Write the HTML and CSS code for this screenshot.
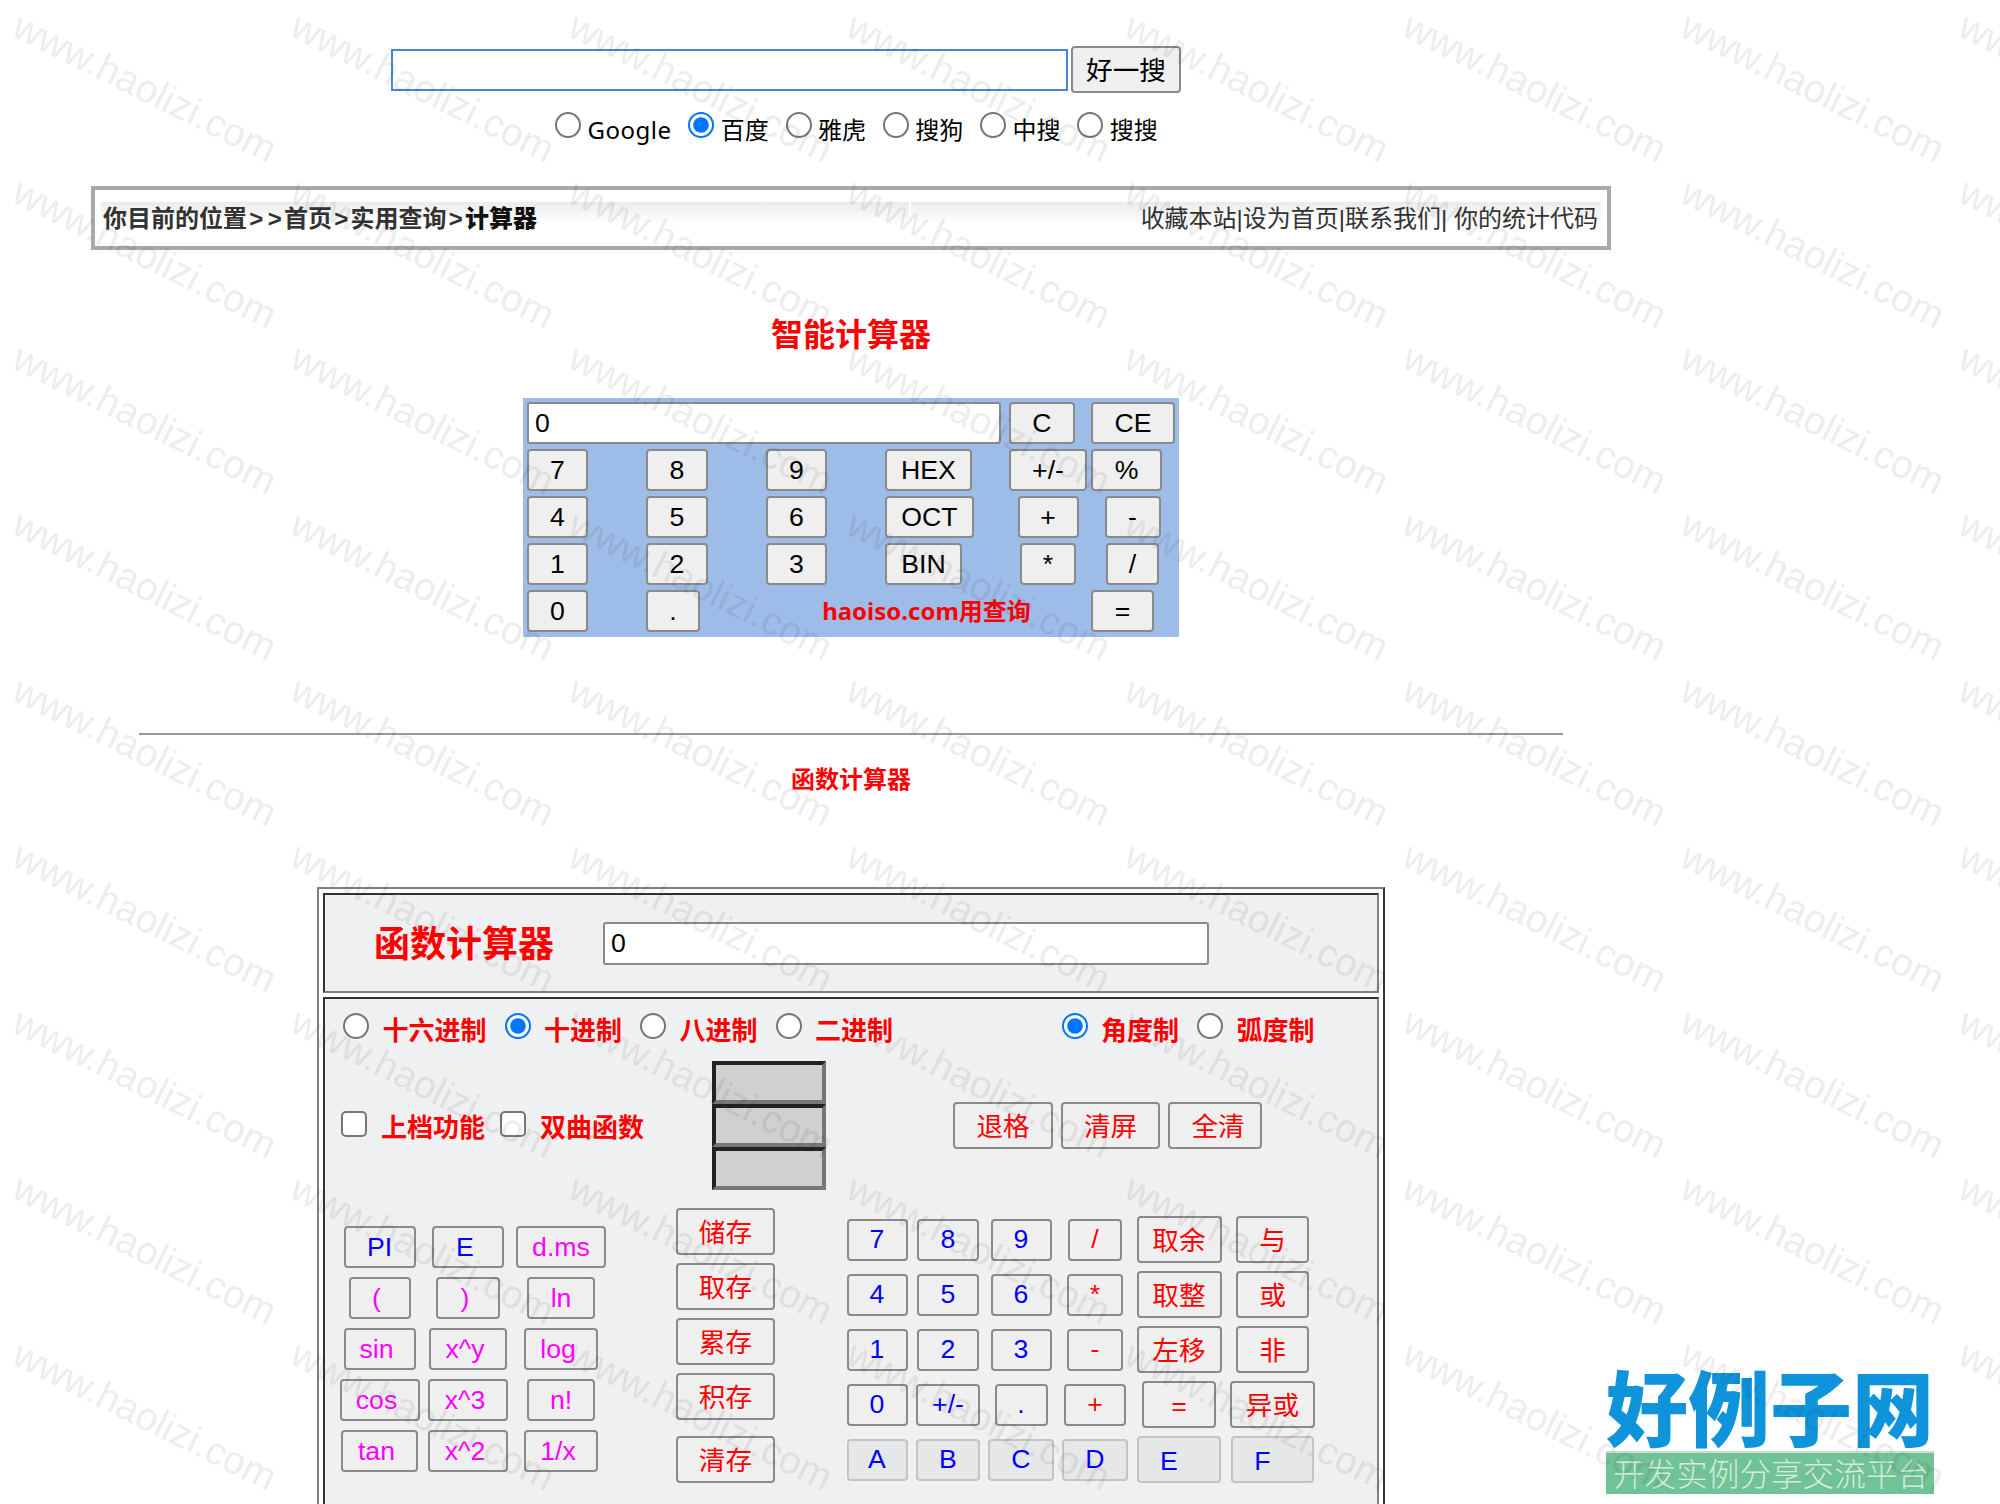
FILE: index.html
```html
<!DOCTYPE html>
<html lang="zh-CN">
<head>
  <meta charset="UTF-8">
  <title>智能计算器</title>
  <link rel="stylesheet" href="styles.css">
</head>
<body>
  <div class="page">
    <form class="search">
      <input class="search-box" type="text">
      <button class="btn search-btn" type="button">好一搜</button>
    </form>
    <div class="engines">
      <label class="engine"><input type="radio" name="engine"><span>Google</span></label>
      <label class="engine"><input type="radio" name="engine" checked><span>百度</span></label>
      <label class="engine"><input type="radio" name="engine"><span>雅虎</span></label>
      <label class="engine"><input type="radio" name="engine"><span>搜狗</span></label>
      <label class="engine"><input type="radio" name="engine"><span>中搜</span></label>
      <label class="engine"><input type="radio" name="engine"><span>搜搜</span></label>
    </div>

    <div class="crumb">
      <div class="crumb-left">你目前的位置<span class="gt">&gt;</span><span class="gt">&gt;</span>首页<span class="gt">&gt;</span>实用查询<span class="gt">&gt;</span><b>计算器</b></div>
      <div class="crumb-right">收藏本站|设为首页|联系我们| 你的统计代码</div>
    </div>

    <h1 class="title">智能计算器</h1>

    <div class="calc">
      <input class="calc-screen" type="text" value="0">
      <button class="btn w66">C</button>
      <button class="btn w84">CE</button>

      <button class="btn w61">7</button>
      <button class="btn w62">8</button>
      <button class="btn w61">9</button>
      <button class="btn w87">HEX</button>
      <button class="btn w78">+/-</button>
      <button class="btn w71">%</button>

      <button class="btn w61">4</button>
      <button class="btn w62">5</button>
      <button class="btn w61">6</button>
      <button class="btn w89">OCT</button>
      <button class="btn w61 mid">+</button>
      <button class="btn w56 mid">-</button>

      <button class="btn w61">1</button>
      <button class="btn w62">2</button>
      <button class="btn w61">3</button>
      <button class="btn w77">BIN</button>
      <button class="btn w56 mid">*</button>
      <button class="btn w53 mid">/</button>

      <button class="btn w61">0</button>
      <button class="btn w54">.</button>
      <div class="calc-note">haoiso.com用查询</div>
      <button class="btn w63">=</button>
    </div>

    <hr class="rule">
    <h2 class="subtitle">函数计算器</h2>

    <div class="sci">
      <div class="panel panel-head">
        <div class="sci-name">函数计算器</div>
        <input class="sci-screen" type="text" value="0">
      </div>
      <div class="panel panel-body">
        <div class="modes">
          <label class="mode"><input type="radio" name="base"><span>十六进制</span></label>
          <label class="mode"><input type="radio" name="base" checked><span>十进制</span></label>
          <label class="mode"><input type="radio" name="base"><span>八进制</span></label>
          <label class="mode"><input type="radio" name="base"><span>二进制</span></label>
          <label class="mode mode-angle"><input type="radio" name="angle" checked><span>角度制</span></label>
          <label class="mode"><input type="radio" name="angle"><span>弧度制</span></label>
        </div>

        <div class="tools">
          <label class="check"><input type="checkbox"><span>上档功能</span></label>
          <label class="check"><input type="checkbox"><span>双曲函数</span></label>
          <div class="lcd">
            <div class="lcd-cell"></div>
            <div class="lcd-cell"></div>
            <div class="lcd-cell"></div>
          </div>
          <div class="clear-btns">
            <button class="btn tall red w100">退格</button>
            <button class="btn tall red w99">清屏</button>
            <button class="btn tall red w94 nudge-right">全清</button>
          </div>
        </div>

        <div class="keys">
          <div class="fn-keys">
            <button class="btn blue w72">PI</button>
            <button class="btn blue w72 nudge">E</button>
            <button class="btn pink w90">d.ms</button>
            <button class="btn pink w62 nudge">(</button>
            <button class="btn pink w64 nudge">)</button>
            <button class="btn pink w68">ln</button>
            <button class="btn pink w72 nudge">sin</button>
            <button class="btn pink w78 nudge">x^y</button>
            <button class="btn pink w74 nudge">log</button>
            <button class="btn pink w80 nudge">cos</button>
            <button class="btn pink w80 nudge">x^3</button>
            <button class="btn pink w68">n!</button>
            <button class="btn pink w77 nudge">tan</button>
            <button class="btn pink w80 nudge">x^2</button>
            <button class="btn pink w74 nudge">1/x</button>
          </div>

          <div class="mem-keys">
            <button class="btn tall red w99">储存</button>
            <button class="btn tall red w99">取存</button>
            <button class="btn tall red w99">累存</button>
            <button class="btn tall red w99">积存</button>
            <button class="btn tall red w99 mem-last">清存</button>
          </div>

          <div class="num-keys">
            <button class="btn blue w61">7</button>
            <button class="btn blue w62">8</button>
            <button class="btn blue w61">9</button>
            <button class="btn red w54">/</button>
            <button class="btn tall red w85">取余</button>
            <button class="btn tall red w73">与</button>

            <button class="btn blue w61">4</button>
            <button class="btn blue w62">5</button>
            <button class="btn blue w61">6</button>
            <button class="btn red w56">*</button>
            <button class="btn tall red w85">取整</button>
            <button class="btn tall red w73">或</button>

            <button class="btn blue w61">1</button>
            <button class="btn blue w62">2</button>
            <button class="btn blue w61">3</button>
            <button class="btn red w56">-</button>
            <button class="btn tall red w85">左移</button>
            <button class="btn tall red w73">非</button>

            <button class="btn blue w61">0</button>
            <button class="btn blue w64">+/-</button>
            <button class="btn blue w53">.</button>
            <button class="btn red w62">+</button>
            <button class="btn tall red w74">=</button>
            <button class="btn tall red w85">异或</button>

            <button class="btn off w61">A</button>
            <button class="btn off w64">B</button>
            <button class="btn off w66">C</button>
            <button class="btn off w66">D</button>
            <button class="btn off tall w84 shift">E</button>
            <button class="btn off tall w83 shift">F</button>
          </div>
        </div>
      </div>
    </div>
  </div>

  <div class="logo">
    <div class="logo-name">好例子网</div>
    <div class="logo-band">开发实例分享交流平台</div>
  </div>

  <svg class="watermark" width="2000" height="1504">
    <defs>
      <pattern id="mark" width="278" height="166" patternUnits="userSpaceOnUse">
        <text x="10" y="35" transform="rotate(26.5 10 35)">www.haolizi.com</text>
      </pattern>
    </defs>
    <rect width="2000" height="1504" fill="url(#mark)"></rect>
  </svg>
</body>
</html>
```

FILE: styles.css
```css
html, body {
  margin: 0;
  padding: 0;
  background: #fff;
  font-family: "Liberation Sans", "Noto Sans CJK SC", sans-serif;
}

body {
  position: relative;
  width: 2000px;
  height: 1504px;
  overflow: hidden;
}

.page {
  width: 1702px;
}

/* shared buttons */
.btn {
  box-sizing: border-box;
  height: 42px;
  padding: 0;
  border: 2px solid #8a8a8a;
  border-radius: 4px;
  background: #efefef;
  color: #000;
  font-family: "Liberation Sans", "Noto Sans CJK SC", sans-serif;
  font-size: 26.67px;
  line-height: 1;
}

.tall {
  height: 47px;
  padding-top: 3px;
}

.red { color: #ff0000; }
.blue { color: #0000ff; }
.pink { color: #ff00ff; }

.off {
  border-color: #c4c4c4;
  background: #e6e7e9;
  color: #0000ff;
}

.shift { padding-right: 20px; }
.nudge { padding-right: 6px; }
.nudge-right { padding-left: 6px; }

.w53 { width: 53px; }
.w54 { width: 54px; }
.w56 { width: 56px; }
.w61 { width: 61px; }
.w62 { width: 62px; }
.w63 { width: 63px; }
.w64 { width: 64px; }
.w66 { width: 66px; }
.w68 { width: 68px; }
.w71 { width: 71px; }
.w72 { width: 72px; }
.w73 { width: 73px; }
.w74 { width: 74px; }
.w77 { width: 77px; }
.w78 { width: 78px; }
.w80 { width: 80px; }
.w83 { width: 83px; }
.w84 { width: 84px; }
.w85 { width: 85px; }
.w87 { width: 87px; }
.w89 { width: 89px; }
.w90 { width: 90px; }
.w94 { width: 94px; }
.w99 { width: 99px; }
.w100 { width: 100px; }

/* search */
.search {
  display: flex;
  align-items: center;
  gap: 3px;
  height: 47px;
  margin: 0;
  padding: 46px 0 0 391px;
}

.search-box {
  box-sizing: border-box;
  width: 677px;
  height: 42px;
  border: 2px solid #4a86d4;
  background: #fff;
}

.search-btn {
  width: 110px;
  height: 47px;
  padding-top: 3px;
}

.engines {
  display: flex;
  gap: 16.75px;
  height: 35px;
  margin-top: 19px;
  padding-left: 555px;
  font-family: "Noto Sans", "Noto Sans CJK SC", sans-serif;
  font-size: 24px;
  line-height: 35px;
}

.engine {
  display: flex;
  gap: 6.5px;
}

.engine:first-child span { letter-spacing: 0.5px; }

/* zoom keeps the control's ring as thick as the big screenshot has it */
.engine input, .mode input, .check input {
  width: 13px;
  height: 13px;
  margin: 0;
  zoom: 2;
}

/* breadcrumb */
.crumb {
  box-sizing: border-box;
  display: flex;
  gap: 2px;
  width: 1520px;
  height: 64px;
  margin: 39px 0 0 91px;
  padding: 12px 6px 0;
  border: 4px solid #a9a9a9;
  color: #333;
  font-size: 24px;
  line-height: 34px;
}

.crumb-left, .crumb-right {
  height: 44px;
  background: linear-gradient(to bottom, #ebebeb, #fff 22px);
}

.crumb-left {
  width: 806px;
  padding-left: 2px;
  font-weight: bold;
  white-space: nowrap;
}

.crumb-left b { color: #111; }
.gt { padding: 0 2.25px; }

.crumb-right {
  flex: 1;
  padding-right: 3px;
  text-align: right;
  white-space: pre;
}

.title {
  margin: 63px 0 0;
  color: #ff0000;
  font-size: 32px;
  line-height: 44px;
  text-align: center;
}

/* simple calculator */
.calc {
  box-sizing: border-box;
  display: grid;
  grid-template-columns: 115px 116px 115px 120px 78px 83px;
  grid-auto-rows: 42px;
  gap: 5px 4px;
  width: 656px;
  height: 239px;
  margin: 41px auto 0;
  padding: 4px 5px 5px 4px;
  background: #9dbce7;
}

.calc .mid { justify-self: center; }

.calc-screen {
  box-sizing: border-box;
  grid-column: 1 / span 4;
  width: 474px;
  height: 42px;
  padding: 0 6px;
  border: 2px solid #8a8a8a;
  border-radius: 3px;
  background: #fff;
  font-family: inherit;
  font-size: 26.67px;
}

.calc-note {
  grid-column: 3 / span 3;
  color: #ff0000;
  font-family: "Noto Sans", "Noto Sans CJK SC", sans-serif;
  font-size: 24px;
  font-weight: bold;
  line-height: 42px;
  text-align: center;
}

.rule {
  width: 1424px;
  height: 2px;
  margin: 96px auto 0;
  border: 0;
  background: #999;
}

.subtitle {
  margin: 28px 0 0;
  color: #ff0000;
  font-size: 24px;
  line-height: 34px;
  text-align: center;
}

/* function calculator */
.sci {
  box-sizing: border-box;
  display: flex;
  flex-direction: column;
  gap: 4px;
  width: 1068px;
  margin: 90px 0 0 317px;
  padding: 4px;
  border: 2px solid;
  border-color: #808080 #333 #333 #808080;
}

.panel {
  box-sizing: border-box;
  border: 2px solid;
  border-color: #333 #808080 #808080 #333;
  background: #eff0f2;
}

.panel-head {
  display: flex;
  align-items: center;
  height: 100px;
  padding-left: 49px;
}

.sci-name {
  width: 229px;
  margin-top: 4px;
  color: #ff0000;
  font-size: 36px;
  font-weight: bold;
  line-height: 48px;
}

.sci-screen {
  box-sizing: border-box;
  width: 606px;
  height: 43px;
  padding: 0 6px;
  border: 2px solid #8a8a8a;
  border-radius: 3px;
  background: #fff;
  font-family: inherit;
  font-size: 26.67px;
}

.panel-body {
  height: 560px;
}

.modes {
  display: flex;
  gap: 18px;
  height: 62px;
  box-sizing: border-box;
  padding: 14px 0 0 18px;
}

.mode {
  display: flex;
  gap: 13.5px;
  height: 36px;
  color: #ff0000;
  font-size: 26px;
  font-weight: bold;
  line-height: 36px;
}

.mode-angle {
  margin-left: 150.5px;
}

.tools {
  display: flex;
  align-items: center;
  gap: 15px;
  height: 129px;
  padding-left: 16px;
}

.check {
  display: flex;
  align-items: center;
  gap: 14px;
  color: #ff0000;
  font-size: 26px;
  font-weight: bold;
  line-height: 34px;
}

.check input { margin-bottom: 1.5px; }
.check span { margin-top: 5px; }

.lcd {
  width: 114px;
  margin-left: 53px;
}

.lcd-cell {
  box-sizing: border-box;
  height: 43px;
  border: 4px solid;
  border-color: #222 #777 #777 #222;
  background: #d0d0d0;
}

.clear-btns {
  display: flex;
  gap: 8px;
  margin-left: 112px;
}

.keys {
  display: flex;
  align-items: flex-start;
  padding-left: 14px;
}

.fn-keys {
  display: grid;
  grid-template-columns: 81px 80px 90px;
  grid-auto-rows: 42px;
  gap: 9px 8px;
  justify-items: center;
  margin-top: 36px;
}

.mem-keys {
  display: flex;
  flex-direction: column;
  gap: 8px;
  margin: 18px 0 0 70px;
}

.mem-last { margin-top: 8px; }

.num-keys {
  display: grid;
  grid-template-columns: 62px 64px 66px 66px 86px 85px;
  grid-auto-rows: 47px;
  gap: 8px;
  align-items: center;
  justify-items: center;
  margin: 26px 0 0 71px;
}

/* corner logo and watermark sit on top of the page */
.logo {
  position: absolute;
  top: 1358px;
  left: 1606px;
  width: 328px;
}

.logo-name {
  color: #0f94dc;
  font-family: "Noto Sans CJK SC", sans-serif;
  font-size: 82px;
  font-weight: 900;
  line-height: 93px;
  white-space: nowrap;
}

.logo-band {
  box-sizing: border-box;
  height: 43px;
  padding-left: 2px;
  border-top: 2px solid #c9dfd2;
  background: #71c295;
  color: rgba(255, 255, 255, 0.7);
  font-family: "Noto Sans CJK SC", sans-serif;
  font-size: 31.6px;
  font-weight: 300;
  line-height: 39px;
  text-align: center;
  white-space: nowrap;
}

.watermark {
  position: absolute;
  top: 0;
  left: 0;
  pointer-events: none;
}

.watermark text {
  fill: rgba(0, 0, 0, 0.07);
  font-family: "Liberation Sans", sans-serif;
  font-size: 39px;
}
```
